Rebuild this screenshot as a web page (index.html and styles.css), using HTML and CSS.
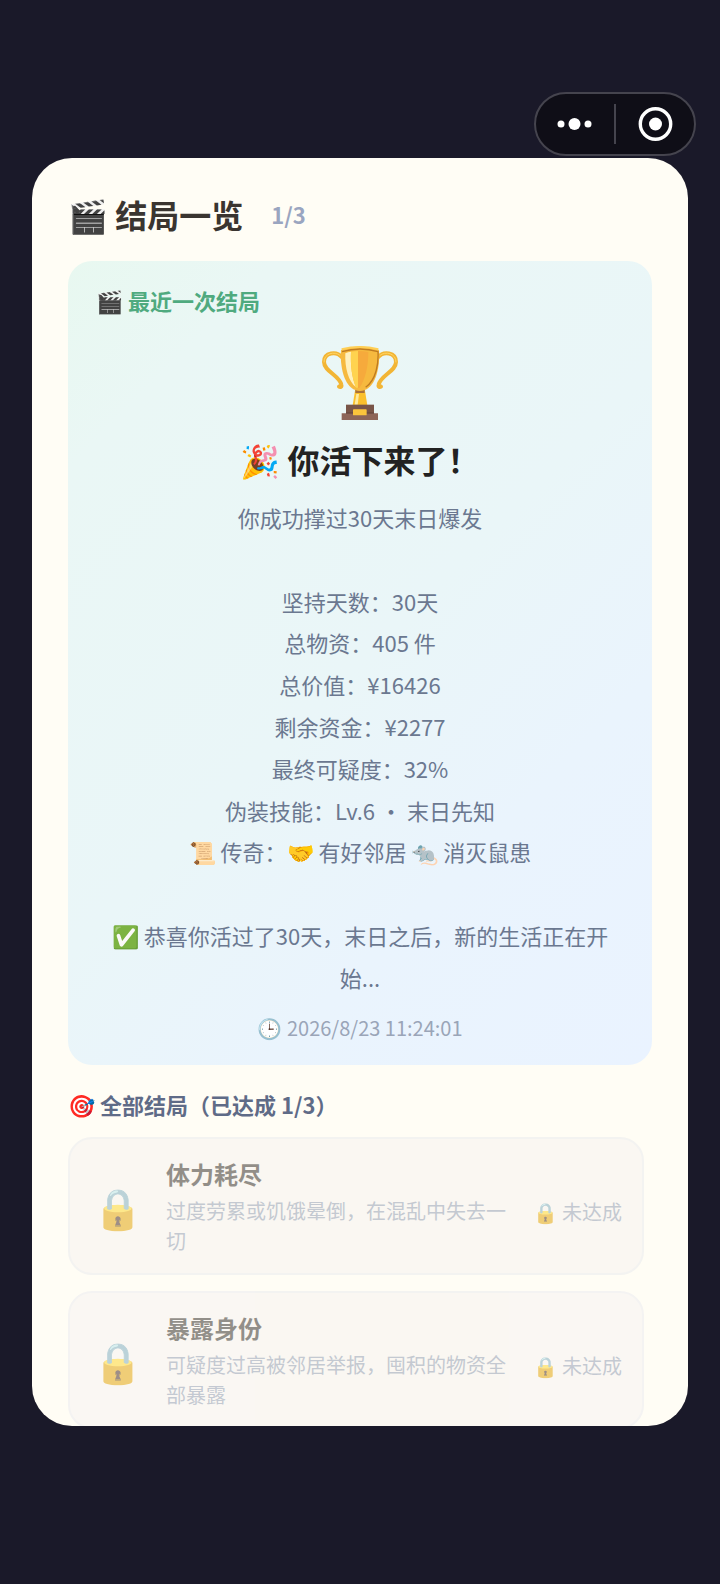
FILE: index.html
```
<!DOCTYPE html>
<html lang="zh-CN">
<head>
	<meta charset="utf-8">
	<meta name="viewport" content="width=device-width, initial-scale=1">
	<title>结局一览</title>
	<link rel="stylesheet" href="styles.css">
</head>
<body>

	<div class="capsule">
		<button class="capsuleBtn" aria-label="更多">
			<svg width="36" height="36" viewBox="0 0 36 36" fill="#fff">
				<circle cx="4" cy="18" r="3.5"/>
				<circle cx="17.5" cy="18" r="6"/>
				<circle cx="31" cy="18" r="3.5"/>
			</svg>
		</button>
		<span class="capsuleLine"></span>
		<button class="capsuleBtn" aria-label="关闭">
			<svg width="36" height="36" viewBox="0 0 36 36">
				<circle cx="18.5" cy="18" r="15.2" fill="none" stroke="#fff" stroke-width="3.4"/>
				<circle cx="18.5" cy="18" r="6.5" fill="#fff"/>
			</svg>
		</button>
	</div>

	<div class="modal">
		<div class="header">
			<h1 class="title">🎬 结局一览</h1>
			<span class="count">1/3</span>
		</div>

		<div class="lastEnding">
			<h2 class="label">🎬 最近一次结局</h2>
			<svg class="trophy" viewBox="0 0 228 224">
				<!-- handles -->
				<g fill="none" stroke="#f2b535" stroke-width="12" stroke-linecap="round">
					<path d="M60 34C44 14 6 18 6 48c0 28 46 40 52 68 2 8-4 8-7 6"/>
					<path d="M168 34c16-20 54-16 54 14 0 28-46 40-52 68-2 8 4 8 7 6"/>
				</g>
				<g fill="none" stroke="#ffd566" stroke-width="3" stroke-linecap="round">
					<path d="M54 28C38 14 5 22 6 48"/>
					<path d="M174 28c16-14 49-6 48 20"/>
				</g>
				<!-- cup -->
				<path fill="#fbc02d" d="M100 128h28l8 50H92z"/>
				<path fill="#fde9a0" d="M103 144h8l-4 32h-9z"/>
				<path fill="#a9713a" d="M100 131h28v10h-28z"/>
				<path fill="#f6b93f" d="M57 12Q114-10 171 12C175 70 158 134 114 135 70 134 53 70 57 12z"/>
				<path fill="#fff0bd" d="M70 22q8-4 17-5c-2 40 3 80 15 106C80 108 68 66 70 22z"/>
				<path fill="#ffd34f" d="M87 17q10-2 21-2v110h-6C90 97 85 57 87 17z"/>
				<path fill="#f6aa3c" d="M108 15q15 0 31 3c0 40-8 82-27 108h-4z"/>
				<path fill="none" stroke="#bf7b20" stroke-width="4" d="M60 17q54-16 108 0c2 35-5 84-37 107"/>
				<path fill="none" stroke="#ffcf55" stroke-width="6" d="M59 10q55-14 110 0"/>
				<!-- base -->
				<path fill="#795548" d="M72 176h84v28H72z"/>
				<path fill="#8d6558" d="M59 202h109v20H59z"/>
				<path fill="#6d4c41" d="M72 198h84v5H72z"/>
				<rect x="93" y="190" width="41" height="18" rx="2" fill="#fbc43c"/>
			</svg>
			<h3 class="endingTitle">🎉 你活下来了！</h3>
			<p class="endingText">你成功撑过30天末日爆发<br>
				<br>
				坚持天数：30天<br>
				总物资：405 件<br>
				总价值：¥16426<br>
				剩余资金：¥2277<br>
				最终可疑度：32%<br>
				伪装技能：Lv.6 · 末日先知<br>
				📜 传奇：🤝 有好邻居 🐀 消灭鼠患<br>
				<br>
				✅ 恭喜你活过了30天，末日之后，新的生活正在开始...</p>
			<div class="time">🕒 2026/8/23 11:24:01</div>
		</div>

		<h2 class="listTitle">🎯 全部结局（已达成 1/3）</h2>
		<ul class="list">
			<li class="item locked">
				<div class="itemIcon">🔒</div>
				<div class="itemInfo">
					<h3 class="itemName">体力耗尽</h3>
					<p class="itemDesc">过度劳累或饥饿晕倒，在混乱中失去一切</p>
				</div>
				<div class="itemStatus">🔒 未达成</div>
			</li>
			<li class="item locked">
				<div class="itemIcon">🔒</div>
				<div class="itemInfo">
					<h3 class="itemName">暴露身份</h3>
					<p class="itemDesc">可疑度过高被邻居举报，囤积的物资全部暴露</p>
				</div>
				<div class="itemStatus">🔒 未达成</div>
			</li>
		</ul>
	</div>

</body>
</html>
```
FILE: styles.css
```
* {
	box-sizing: border-box;
	margin: 0;
	padding: 0;
}

body {
	display: flex;
	align-items: center;
	height: 100vh;
	padding: 0 32px;
	background-color: #1a1929;
	font-family: "Noto Sans CJK SC", sans-serif;
	font-size: 22px;
	color: #3a3530;
}

/* floating menu in the top corner */
.capsule {
	position: absolute;
	top: 92px;
	right: 24px;
	display: flex;
	align-items: center;
	width: 162px;
	height: 64px;
	border: 2px solid #45444e;
	border-radius: 32px;
	background-color: #0f0e17;
}

.capsuleBtn {
	display: flex;
	flex: 1;
	justify-content: center;
	border: none;
	background: none;
	cursor: pointer;
}

.capsuleLine {
	width: 2px;
	height: 40px;
	background-color: #45444e;
}

.modal {
	width: 100%;
	height: 80vh;
	padding: 36px 36px 0;
	border-radius: 40px;
	background-color: #fffdf5;
	overflow: hidden;
}

.header {
	display: flex;
	align-items: center;
	gap: 28px;
	margin-bottom: 27px;
	line-height: 40px;
}

.title {
	font-size: 32px;
}

.count {
	font-weight: bold;
	color: #9aa5c0;
}

.lastEnding {
	padding: 22px 28px;
	border-radius: 24px;
	background: linear-gradient(135deg, #e8f8f0, #eaf7f5 15%, #eaf6f8 50%, #eaf4fd 72%, #eaf3ff);
	text-align: center;
}

.label {
	font-size: 22px;
	line-height: 34px;
	text-align: left;
	color: #4faa7f;
}

.trophy {
	display: block;
	width: 76px;
	margin: 29px auto 16px;
}

.endingTitle {
	margin-bottom: 16px;
	font-size: 32px;
	line-height: 44px;
	color: #222;
}

.endingText {
	line-height: 1.9;
	color: #6b7890;
}

.time {
	margin-top: 14px;
	font-size: 20px;
	line-height: 30px;
	color: #9aa5b8;
}

.listTitle {
	margin: 22px 0 16px;
	font-size: 22px;
	line-height: 34px;
	color: #5f6b87;
}

.list {
	display: flex;
	flex-direction: column;
	gap: 16px;
	padding-right: 8px;
	list-style: none;
}

.item {
	display: flex;
	align-items: center;
	gap: 20px;
	padding: 17px 20px;
	border: 2px solid #ebebee;
	border-radius: 24px;
	background-color: #f6f3f1;
}

.locked {
	opacity: 0.55;
}

.itemIcon {
	width: 56px;
	font-size: 40px;
	text-align: center;
}

.itemInfo {
	flex: 1;
}

.itemName {
	margin-bottom: 4px;
	font-size: 24px;
	line-height: 36px;
}

.itemDesc {
	font-size: 20px;
	line-height: 30px;
	color: #949fb4;
}

.itemStatus {
	padding-top: 12px;
	font-size: 20px;
	white-space: nowrap;
	color: #949fb4;
}
```
